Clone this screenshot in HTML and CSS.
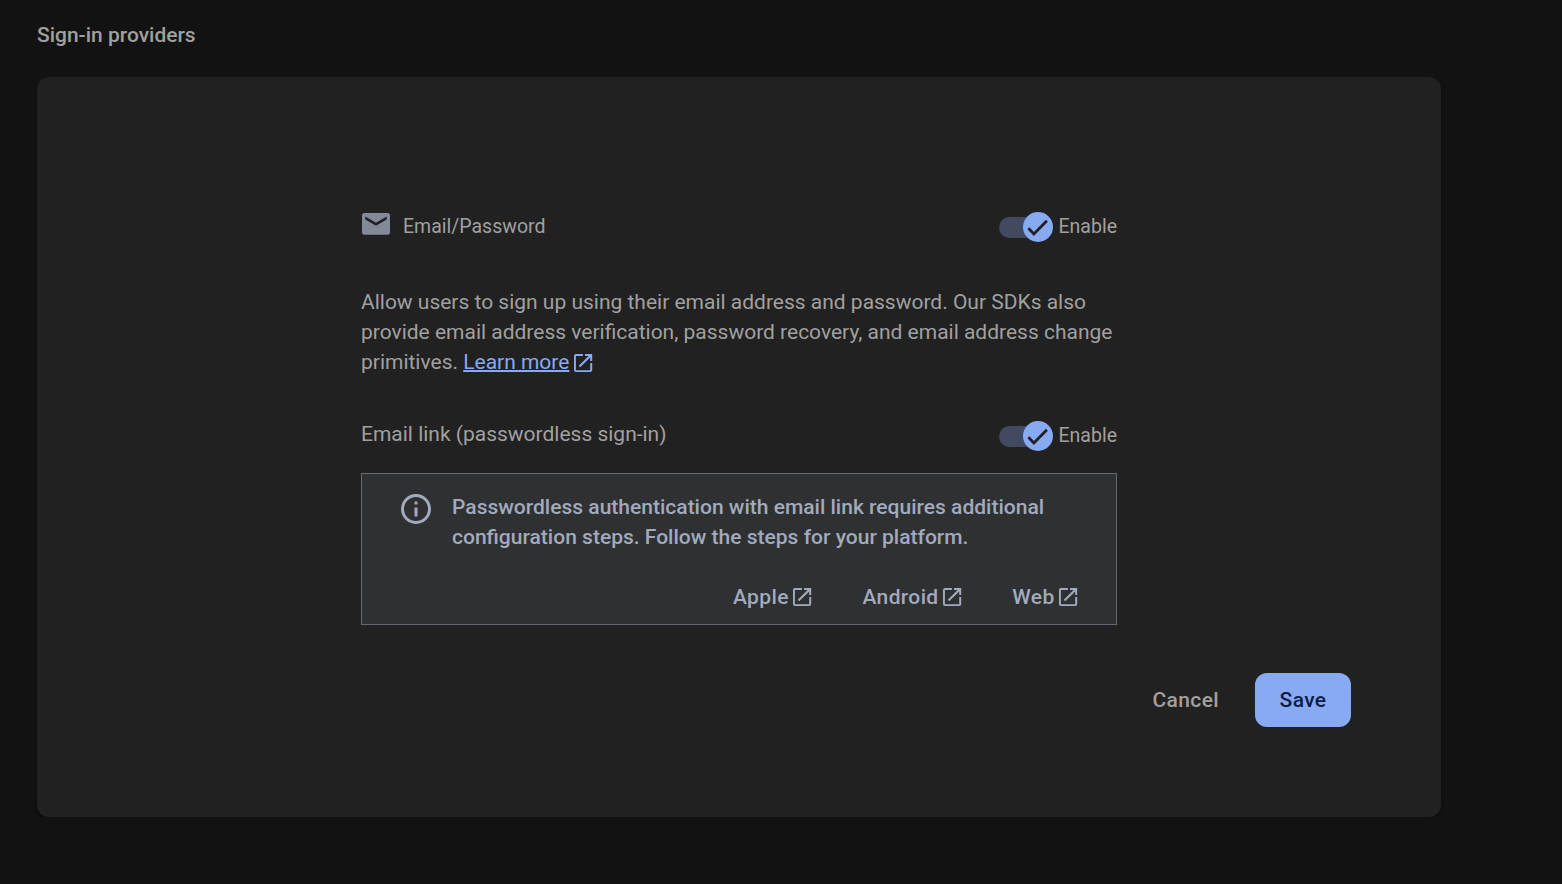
FILE: index.html
```html
<!DOCTYPE html>
<html lang="en">
<head>
<meta charset="utf-8">
<title>Sign-in providers</title>
<link rel="stylesheet" href="styles.css">
</head>
<body>
<svg width="0" height="0" class="defs" aria-hidden="true">
  <symbol id="open" viewBox="0 0 24 24"><path d="M19.200 19.200H4.900V4.900h7V3H5a2 2 0 0 0-2 2v14a2 2 0 0 0 2 2h14.200c1.100 0 2-.9 2-2v-7h-2v7.200zM14 3v2h3.590l-9.830 9.830 1.410 1.410L19.200 6.410V10h2V3h-7.200z"/></symbol>
  <symbol id="check" viewBox="0 0 30 30"><path d="M5.400 16.200l5.500 5.700L23.900 8.800" fill="none" stroke="currentColor" stroke-width="2.800"/></symbol>
</svg>
<main class="page">
  <h1 class="title">Sign-in providers</h1>
  <section class="card">
    <div class="form">
      <div class="row">
        <div class="provider">
          <svg class="mail" viewBox="0 0 28 22"><path d="M2.500 0h23A2.500 2.500 0 0 1 28 2.500v16.700a2.500 2.500 0 0 1-2.500 2.500h-23A2.500 2.500 0 0 1 0 19.200V2.500A2.500 2.500 0 0 1 2.500 0zm22.200 6.500V3.500L14 9.700 3.300 3.500v3L14 12.700z"/></svg>
          <span>Email/Password</span>
        </div>
        <div class="toggle"><span class="track"><span class="thumb"><svg><use href="#check"/></svg></span></span><span class="toggle-label">Enable</span></div>
      </div>
      <p class="description">Allow users to sign up using their email address and password. Our SDKs also<br>provide email address verification, password recovery, and email address change<br>primitives. <a class="learn"><span class="underlined">Learn more</span><svg class="open"><use href="#open"/></svg></a></p>
      <div class="row">
        <span class="link-label">Email link (passwordless sign-in)</span>
        <div class="toggle"><span class="track"><span class="thumb"><svg><use href="#check"/></svg></span></span><span class="toggle-label">Enable</span></div>
      </div>
      <div class="notice">
        <div class="notice-body">
          <svg class="info" viewBox="0 0 24 24"><path d="M11 7h2v2h-2zm0 4h2v6h-2zm1-9a10 10 0 1 0 0 20 10 10 0 0 0 0-20zm0 18a8 8 0 1 1 0-16 8 8 0 0 1 0 16z"/></svg>
          <p class="notice-text">Passwordless authentication with email link requires additional<br>configuration steps. Follow the steps for your platform.</p>
        </div>
        <div class="platforms">
          <a class="platform">Apple<svg class="open"><use href="#open"/></svg></a>
          <a class="platform">Android<svg class="open"><use href="#open"/></svg></a>
          <a class="platform">Web<svg class="open"><use href="#open"/></svg></a>
        </div>
      </div>
    </div>
    <div class="actions">
      <button class="button cancel">Cancel</button>
      <button class="button save">Save</button>
    </div>
  </section>
</main>
</body>
</html>
```
FILE: styles.css
```css
* { box-sizing: border-box; }
body { margin: 0; background: #121212; color: #a0a0a0; font-family: Roboto, sans-serif; font-size: 20.99px; line-height: 30px; }
svg { fill: currentColor; flex: none; }
.defs { position: absolute; }
.page { padding: 20px 121px 0 37px; }
.title { margin: 0 0 27px; font-size: 20.98px; font-weight: 500; line-height: 30px; }
.card { height: 740px; padding: 134px 90px 0 324px; border-radius: 12px; background: #212121; box-shadow: 0 2px 3px rgba(0, 0, 0, .45); }
.form { width: 756px; }
.row { display: flex; align-items: center; justify-content: space-between; height: 32px; }
.provider { display: flex; align-items: center; margin-top: -1px; font-size: 19.5px; }
.mail { width: 28px; height: 22px; margin: -5px 13px 0 1px; color: #828999; }
.toggle { display: flex; align-items: center; gap: 6px; font-size: 19.5px; }
.toggle-label { margin-top: -1px; }
.link-label { margin-top: -4px; }
.track { display: flex; align-items: center; justify-content: flex-end; width: 54px; height: 21px; border-radius: 11px; background: #414a60; }
.thumb { display: grid; place-items: center; flex: none; width: 30px; height: 30px; border-radius: 50%; background: #87aaf3; color: #202124; }
.thumb svg { width: 30px; height: 30px; }
.description { margin: 44px 0 43px; white-space: nowrap; }
.learn { color: #87aaf3; }
.underlined { text-decoration: underline; text-decoration-thickness: 2px; }
.open { width: 24px; height: 24px; }
.learn .open { margin: -7px 0 0 1.5px; vertical-align: -6px; }
.notice { height: 152px; margin-top: 21px; border: 1px solid #646973; background: #2e3032; padding: 18px 36px 0; color: #a2aabd; font-size: 21.02px; font-weight: 500; }
.notice-body { display: flex; }
.info { width: 36px; height: 36px; margin: -1px 18px 0 0; }
.notice-text { margin: 0; white-space: nowrap; }
.platforms { display: flex; justify-content: flex-end; gap: 48.3px; margin-top: 30px; letter-spacing: .36px; }
.platform { display: flex; align-items: center; gap: 1.4px; }
.actions { display: flex; justify-content: flex-end; gap: 12px; margin-top: 48px; }
.button { height: 54px; padding: 0 24px; border: 0; border-radius: 12px; background: none; color: #a0a0a0; font: 500 21px Roboto, sans-serif; letter-spacing: .36px; }
.save { width: 96px; background: #87aaf3; color: #0d1d47; }
```
